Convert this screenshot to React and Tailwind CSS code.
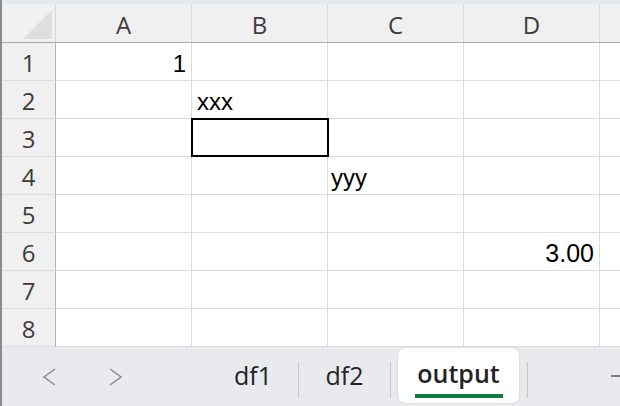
import React from 'react';

const cols = ['A', 'B', 'C', 'D'];

// cell contents by row (index 0 = row 1)
const rows = [
  { A: { text: '1', align: 'right', size: 'text-[24px]' } },
  { B: { text: 'xxx', align: 'left', size: 'text-[24px]', pl: 'pl-[5px]' } },
  { B: { selected: true } },
  { C: { text: 'yyy', align: 'left', size: 'text-[24px]', pl: 'pl-[3px]' } },
  {},
  { D: { text: '3.00', align: 'right', size: 'text-[25px]' } },
  {},
  {},
];

const Cell = ({ data }) => {
  if (!data) return <div className="border-r border-b border-[#dcdcdc]" />;
  if (data.selected) {
    return (
      <div className="relative border-r border-b border-[#dcdcdc]">
        <div className="absolute left-[-1px] top-[-1px] right-[-2px] bottom-[-1px] border-2 border-black" />
      </div>
    );
  }
  return (
    <div
      className={`flex items-end border-r border-b border-[#dcdcdc] pb-[4px] ${
        data.align === 'right' ? 'justify-end pr-[5px]' : data.pl
      }`}
    >
      <span className={`${data.size} leading-none text-black whitespace-nowrap`}>{data.text}</span>
    </div>
  );
};

const App = () => {
  return (
    <div
      className="w-[620px] h-[406px] overflow-hidden border-l-2 border-[#8a8a8a] flex flex-col bg-white"
      style={{ fontFamily: '"Liberation Sans", Arial, sans-serif' }}
    >
      {/* thin strip above the headers */}
      <div className="h-[4px] shrink-0 bg-[#e6e9ed]" />

      {/* column headers */}
      <div
        className="grid grid-cols-[54px_136px_136px_136px_136px_1fr] h-[39px] shrink-0 bg-[#f0f0f0] border-b border-[#a9a9a9] text-[#3c3c3c]"
        style={{ fontFamily: '"Open Sans", sans-serif' }}
      >
        <div className="flex justify-end items-end pr-[3px] pb-[3px] border-r border-[#d6d6d6]">
          <svg width="29" height="29" viewBox="0 0 29 29">
            <polygon points="29,0 29,29 0,29" fill="#dedede" />
          </svg>
        </div>
        {cols.map((c) => (
          <div key={c} className="flex justify-center items-end pb-[5px] border-r border-[#dcdcdc]">
            <span className="text-[24px] leading-none">{c}</span>
          </div>
        ))}
        <div />
      </div>

      {/* rows */}
      {rows.map((r, i) => (
        <div key={i} className="grid grid-cols-[54px_136px_136px_136px_136px_1fr] h-[38px] shrink-0">
          <div
            className="flex justify-center items-end pb-[5px] bg-[#f0f0f0] border-r border-[#b4b4b4] border-b border-b-[#dcdcdc] text-[#3c3c3c]"
            style={{ fontFamily: '"Open Sans", sans-serif' }}
          >
            <span className="text-[24px] leading-none">{i + 1}</span>
          </div>
          {cols.map((c) => (
            <Cell key={c} data={r[c]} />
          ))}
          <div className="border-b border-[#dcdcdc]" />
        </div>
      ))}

      {/* sheet tab bar */}
      <div
        className="flex-1 flex bg-[#e8eaed] text-[#242424]"
        style={{ fontFamily: '"Open Sans", sans-serif' }}
      >
        <div className="w-[41px] shrink-0" />
        <div className="flex items-center shrink-0">
          <svg width="13" height="18" viewBox="0 0 13 18">
            <polyline points="12,1 1,9 12,17" fill="none" stroke="#8c8c8c" strokeWidth="1.5" />
          </svg>
        </div>
        <div className="w-[53px] shrink-0" />
        <div className="flex items-center shrink-0">
          <svg width="13" height="18" viewBox="0 0 13 18">
            <polyline points="1,1 12,9 1,17" fill="none" stroke="#8c8c8c" strokeWidth="1.5" />
          </svg>
        </div>
        <div className="w-[86px] shrink-0" />
        <div className="w-[90px] shrink-0 flex justify-center items-center pb-[2px]">
          <span className="text-[25px] leading-none">df1</span>
        </div>
        <div className="w-px shrink-0 mt-[15px] h-[36px] bg-[#c6c6c6]" />
        <div className="w-[91px] shrink-0 flex justify-center items-center pb-[2px]">
          <span className="text-[25px] leading-none">df2</span>
        </div>
        <div className="w-px shrink-0 mt-[15px] h-[36px] bg-[#c6c6c6]" />
        <div className="w-[7px] shrink-0" />
        <div className="w-[121px] shrink-0 mt-px h-[55px] bg-white rounded-[7px] shadow-[0_0_2px_rgba(0,0,0,0.18)] flex flex-col items-center pt-[13px]">
          <span className="text-[25px] leading-none font-semibold">output</span>
          <div className="mt-[8px] w-[88px] h-[4px] bg-[#107c41]" />
        </div>
        <div className="w-[8px] shrink-0" />
        <div className="w-px shrink-0 mt-[15px] h-[36px] bg-[#c6c6c6]" />
        <div className="w-[83px] shrink-0" />
        <div className="flex items-center shrink-0 pb-[2px]">
          <svg width="22" height="22" viewBox="0 0 22 22">
            <line x1="0" y1="11" x2="22" y2="11" stroke="#555" strokeWidth="1.5" />
            <line x1="11" y1="0" x2="11" y2="22" stroke="#555" strokeWidth="1.5" />
          </svg>
        </div>
      </div>
    </div>
  );
};

export default App;
